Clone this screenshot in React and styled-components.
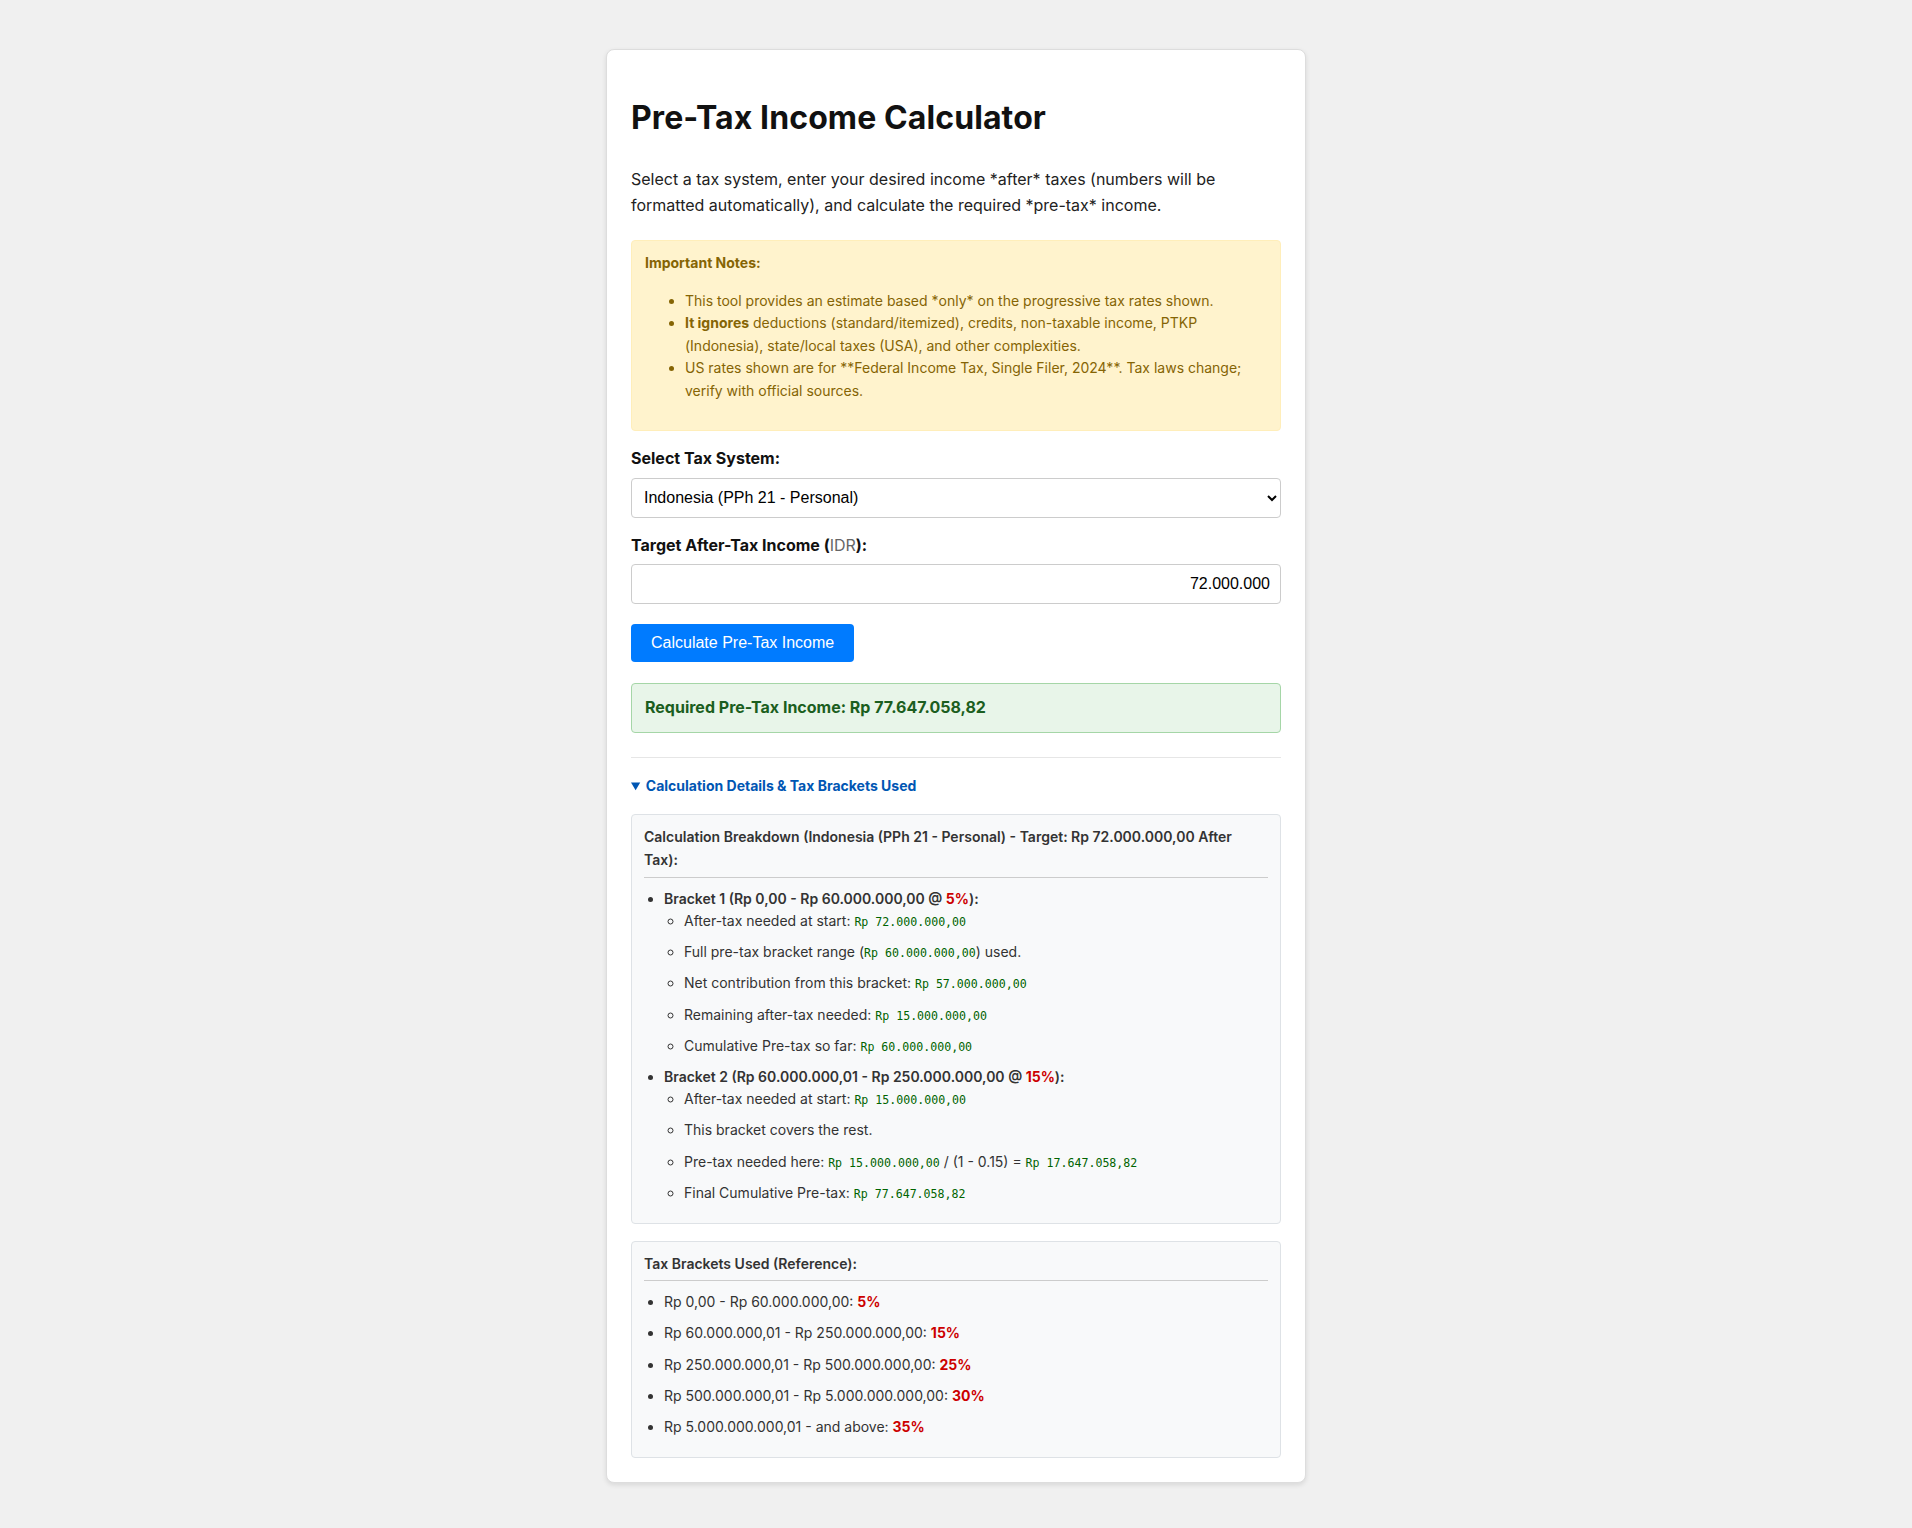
import React from 'react'
import styled, { createGlobalStyle } from 'styled-components';

const GlobalStyle = createGlobalStyle`
    body {
        margin: 0;
        padding: 49px 20px 49px;
        background-color: #f0f0f0;
        font-family: Inter, "Liberation Sans", sans-serif;
        color: #222;
    }
    * { box-sizing: border-box; }
`

//styled Components
const Card = styled.div`
    max-width: 700px;
    margin: 0 auto;
    background: #fff;
    padding: 24px;
    border: 1px solid #ddd;
    border-radius: 8px;
    box-shadow: 0 2px 5px rgba(0,0,0,0.1);
`
const Title = styled.h1`
    font-size: 32px;
    line-height: 1.2;
    font-weight: 700;
    letter-spacing: 0.1px;
    color: #111;
    margin: 25px 0 30px;
`
const Intro = styled.p`
    font-size: 16px;
    line-height: 1.6;
    margin: 0 0 21px;
    color: #222;
`
const Notes = styled.div`
    background: #fff3cd;
    border: 1px solid #ffeeba;
    border-radius: 4px;
    padding: 11px 13px 12px;
    color: #856404;
    font-size: 14px;
    line-height: 1.6;
`
const NotesTitle = styled.div`
    font-weight: 700;
`
const NotesList = styled.ul`
    margin: 16px 0;
    padding-left: 40px;
    li { margin: 0; }
`
const Field = styled.div`
    margin-top: 15px;
`
const Label = styled.label`
    display: block;
    font-size: 16px;
    line-height: 1.6;
    font-weight: 700;
    color: #111;
    margin-bottom: 6px;
`
const Unit = styled.span`
    font-weight: 400;
    color: #666;
`
const Select = styled.select`
    width: 100%;
    height: 40px;
    padding: 0 8px;
    font-family: "Liberation Sans", Arial, sans-serif;
    font-size: 16px;
    color: #000;
    background: #fff;
    border: 1px solid #ccc;
    border-radius: 4px;
`
const Input = styled.input`
    width: 100%;
    height: 40px;
    padding: 0 10px;
    font-family: "Liberation Sans", Arial, sans-serif;
    font-size: 16px;
    text-align: right;
    color: #000;
    border: 1px solid #ccc;
    border-radius: 4px;
`
const Button = styled.button`
    margin-top: 20px;
    height: 38px;
    padding: 0 20px;
    background: #007bff;
    color: #fff;
    border: none;
    border-radius: 4px;
    font-family: "Liberation Sans", Arial, sans-serif;
    font-size: 16px;
    cursor: pointer;
`
const Result = styled.div`
    margin-top: 21px;
    padding: 11px 13px;
    background: #e8f5e9;
    border: 1px solid #a5d6a7;
    border-radius: 4px;
    color: #1b5e20;
    font-size: 16px;
    line-height: 1.6;
    font-weight: 700;
`
const Divider = styled.hr`
    border: none;
    border-top: 1px solid #e6e6e6;
    margin: 24px 0 17px;
`
const Summary = styled.summary`
    color: #0056b3;
    font-size: 14px;
    line-height: 1.6;
    font-weight: 700;
    cursor: pointer;
    margin-bottom: 17px;
`
const Panel = styled.div`
    background: #f8f9fa;
    border: 1px solid #dee2e6;
    border-radius: 4px;
    padding: 10px 12px;
    font-size: 14px;
    line-height: 1.6;
    color: #333;
    & + & { margin-top: 17px; }
`
const PanelTitle = styled.div`
    font-weight: 600;
    line-height: 1.66;
    padding-bottom: 5px;
    border-bottom: 1px solid #ccc;
    margin-bottom: 10px;
`
const List = styled.ul`
    margin: 0;
    padding-left: 20px;
`
const Item = styled.li`
    font-weight: ${p => (p.$bold ? 600 : 400)};
    margin-bottom: ${p => (p.$gap ? '8.8px' : '0')};
`
const SubList = styled.ul`
    margin: 0;
    padding-left: 20px;
    list-style-type: circle;
    font-weight: 400;
    li { margin-bottom: 8.8px; }
`
const Code = styled.code`
    font-family: "DejaVu Sans Mono", monospace;
    font-size: 11.6px;
    color: #006400;
`
const Rate = styled.span`
    color: #c00;
    font-weight: 700;
`

const brackets = [
    ['Rp 0,00 - Rp 60.000.000,00', '5%'],
    ['Rp 60.000.000,01 - Rp 250.000.000,00', '15%'],
    ['Rp 250.000.000,01 - Rp 500.000.000,00', '25%'],
    ['Rp 500.000.000,01 - Rp 5.000.000.000,00', '30%'],
    ['Rp 5.000.000.000,01 - and above', '35%'],
]

const App = () => {
  return (
    <>
      <GlobalStyle />
      <Card>
        <Title>Pre-Tax Income Calculator</Title>
        <Intro>
          Select a tax system, enter your desired income *after* taxes (numbers will be
          formatted automatically), and calculate the required *pre-tax* income.
        </Intro>

        <Notes>
          <NotesTitle>Important Notes:</NotesTitle>
          <NotesList>
            <li>This tool provides an estimate based *only* on the progressive tax rates shown.</li>
            <li><strong>It ignores</strong> deductions (standard/itemized), credits, non-taxable income, PTKP (Indonesia), state/local taxes (USA), and other complexities.</li>
            <li>US rates shown are for **Federal Income Tax, Single Filer, 2024**. Tax laws change; verify with official sources.</li>
          </NotesList>
        </Notes>

        <Field>
          <Label htmlFor="system">Select Tax System:</Label>
          <Select id="system" defaultValue="id">
            <option value="id">Indonesia (PPh 21 - Personal)</option>
            <option value="us">USA (Federal - Single Filer, 2024)</option>
          </Select>
        </Field>

        <Field>
          <Label htmlFor="income">Target After-Tax Income (<Unit>IDR</Unit>):</Label>
          <Input id="income" type="text" defaultValue="72.000.000" />
        </Field>

        <Button>Calculate Pre-Tax Income</Button>

        <Result>Required Pre-Tax Income: Rp 77.647.058,82</Result>

        <Divider />

        <details open>
          <Summary>Calculation Details &amp; Tax Brackets Used</Summary>

          <Panel>
            <PanelTitle>Calculation Breakdown (Indonesia (PPh 21 - Personal) - Target: Rp 72.000.000,00 After Tax):</PanelTitle>
            <List>
              <Item $bold>
                Bracket 1 (Rp 0,00 - Rp 60.000.000,00 @ <Rate>5%</Rate>):
                <SubList>
                  <li>After-tax needed at start: <Code>Rp 72.000.000,00</Code></li>
                  <li>Full pre-tax bracket range (<Code>Rp 60.000.000,00</Code>) used.</li>
                  <li>Net contribution from this bracket: <Code>Rp 57.000.000,00</Code></li>
                  <li>Remaining after-tax needed: <Code>Rp 15.000.000,00</Code></li>
                  <li>Cumulative Pre-tax so far: <Code>Rp 60.000.000,00</Code></li>
                </SubList>
              </Item>
              <Item $bold>
                Bracket 2 (Rp 60.000.000,01 - Rp 250.000.000,00 @ <Rate>15%</Rate>):
                <SubList>
                  <li>After-tax needed at start: <Code>Rp 15.000.000,00</Code></li>
                  <li>This bracket covers the rest.</li>
                  <li>Pre-tax needed here: <Code>Rp 15.000.000,00</Code> / (1 - 0.15) = <Code>Rp 17.647.058,82</Code></li>
                  <li>Final Cumulative Pre-tax: <Code>Rp 77.647.058,82</Code></li>
                </SubList>
              </Item>
            </List>
          </Panel>

          <Panel>
            <PanelTitle>Tax Brackets Used (Reference):</PanelTitle>
            <List>
              {brackets.map(([range, rate]) => (
                <Item key={range} $gap>{range}: <Rate>{rate}</Rate></Item>
              ))}
            </List>
          </Panel>
        </details>
      </Card>
    </>
  )
}

export default App
